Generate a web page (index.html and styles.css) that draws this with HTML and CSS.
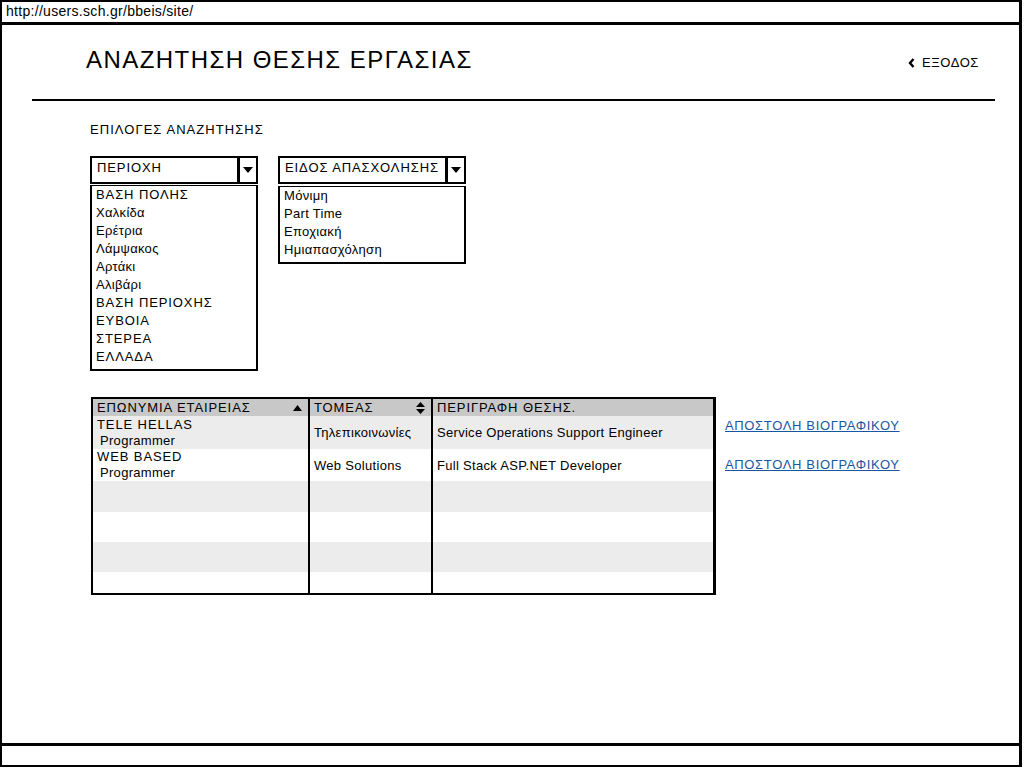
FILE: index.html
```html
<!DOCTYPE html>
<html lang="el">
<head>
<meta charset="utf-8">
<title>Αναζήτηση θέσης εργασίας</title>
<link rel="stylesheet" href="styles.css">
</head>
<body>
<div class="window">
  <div class="urlbar">http://users.sch.gr/bbeis/site/</div>
  <div class="content">
    <header class="top">
      <h1 class="title">ΑΝΑΖΗΤΗΣΗ ΘΕΣΗΣ ΕΡΓΑΣΙΑΣ</h1>
      <a class="exit caps" href="#"><svg width="7" height="10" viewBox="0 0 7 10"><path d="M5.5 1 L2 5 L5.5 9" fill="none" stroke="#000" stroke-width="2.4"/></svg>ΕΞΟΔΟΣ</a>
    </header>
    <div class="rule"></div>
    <section class="filters">
      <div class="filters-label caps">ΕΠΙΛΟΓΕΣ ΑΝΑΖΗΤΗΣΗΣ</div>
      <div class="combos">
        <div class="combo combo-area">
          <div class="select">
            <div class="select-text caps">ΠΕΡΙΟΧΗ</div>
            <div class="select-btn"><svg width="10" height="6" viewBox="0 0 10 6"><path d="M0 0 H10 L5 6 Z" fill="#000"/></svg></div>
          </div>
          <ul class="list">
            <li class="caps">ΒΑΣΗ ΠΟΛΗΣ</li>
            <li>Χαλκίδα</li>
            <li>Ερέτρια</li>
            <li>Λάμψακος</li>
            <li>Αρτάκι</li>
            <li>Αλιβάρι</li>
            <li class="caps">ΒΑΣΗ ΠΕΡΙΟΧΗΣ</li>
            <li class="caps">ΕΥΒΟΙΑ</li>
            <li class="caps">ΣΤΕΡΕΑ</li>
            <li class="caps">ΕΛΛΑΔΑ</li>
          </ul>
        </div>
        <div class="combo combo-type">
          <div class="select">
            <div class="select-text caps">ΕΙΔΟΣ ΑΠΑΣΧΟΛΗΣΗΣ</div>
            <div class="select-btn"><svg width="10" height="6" viewBox="0 0 10 6"><path d="M0 0 H10 L5 6 Z" fill="#000"/></svg></div>
          </div>
          <ul class="list">
            <li>Μόνιμη</li>
            <li>Part Time</li>
            <li>Εποχιακή</li>
            <li>Ημιαπασχόληση</li>
          </ul>
        </div>
      </div>
    </section>
    <section class="results">
      <div class="grid">
        <div class="col col1">
          <div class="th caps">ΕΠΩΝΥΜΙΑ ΕΤΑΙΡΕΙΑΣ<svg class="sort" width="9" height="6" viewBox="0 0 9 6"><path d="M0 6 L4.5 0 L9 6 Z" fill="#000"/></svg></div>
          <div class="td r1 alt two"><span class="caps">TELE HELLAS</span><span class="sub">Programmer</span></div>
          <div class="td r2 two"><span class="caps">WEB BASED</span><span class="sub">Programmer</span></div>
          <div class="td r3 alt"></div>
          <div class="td r4"></div>
          <div class="td r5 alt"></div>
          <div class="td r6"></div>
        </div>
        <div class="col col2">
          <div class="th caps">ΤΟΜΕΑΣ<svg class="sort" width="9" height="12" viewBox="0 0 9 12"><path d="M0 5 L4.5 0 L9 5 Z M0 7 L4.5 12 L9 7 Z" fill="#000"/></svg></div>
          <div class="td r1 alt">Τηλεπικοινωνίες</div>
          <div class="td r2">Web Solutions</div>
          <div class="td r3 alt"></div>
          <div class="td r4"></div>
          <div class="td r5 alt"></div>
          <div class="td r6"></div>
        </div>
        <div class="col col3">
          <div class="th caps">ΠΕΡΙΓΡΑΦΗ ΘΕΣΗΣ.</div>
          <div class="td r1 alt">Service Operations Support Engineer</div>
          <div class="td r2">Full Stack ASP.NET Developer</div>
          <div class="td r3 alt"></div>
          <div class="td r4"></div>
          <div class="td r5 alt"></div>
          <div class="td r6"></div>
        </div>
      </div>
      <div class="links">
        <a href="#" class="link caps">ΑΠΟΣΤΟΛΗ ΒΙΟΓΡΑΦΙΚΟΥ</a>
        <a href="#" class="link caps">ΑΠΟΣΤΟΛΗ ΒΙΟΓΡΑΦΙΚΟΥ</a>
      </div>
    </section>
  </div>
  <div class="statusbar"></div>
</div>
</body>
</html>
```

FILE: styles.css
```css
* { box-sizing: border-box; }
html, body { margin: 0; padding: 0; background: #fff; }
body {
  font-family: "Liberation Sans", Arial, sans-serif;
  color: #000;
  width: 1024px;
  height: 768px;
  overflow: hidden;
  letter-spacing: 0.3px;
}
.caps { letter-spacing: 0.9px; }
.window {
  width: 1022px;
  height: 767px;
  border: 2px solid #000;
  border-right-width: 3px;
  display: flex;
  flex-direction: column;
}
.urlbar {
  height: 23px;
  border-bottom: 3px solid #000;
  font-size: 14px;
  line-height: 19px;
  padding-left: 4px;
  letter-spacing: 0.3px;
}
.content {
  flex: 1;
  padding: 0 0 0 30px;
}
.statusbar {
  height: 22px;
  border-top: 3px solid #000;
}
.top {
  display: flex;
  justify-content: space-between;
  align-items: flex-start;
  padding: 20px 40px 0 54px;
  height: 74px;
}
.title {
  margin: 0;
  font-weight: normal;
  font-size: 24px;
  line-height: 30px;
  letter-spacing: 1.45px;
}
.exit {
  margin-top: 10px;
  color: #000;
  text-decoration: none;
  font-size: 13px;
  display: flex;
  align-items: center;
  gap: 7px;
}
.exit.caps { letter-spacing: 0.6px; }
.rule {
  width: 963px;
  height: 2px;
  background: #000;
}
.filters { padding: 21px 0 0 58px; }
.filters-label { font-size: 13px; line-height: 16px; }
.filters-label.caps { letter-spacing: 1.05px; }
.combos {
  display: flex;
  gap: 20px;
  margin-top: 18px;
  align-items: flex-start;
}
.combo-area { width: 168px; }
.combo-type { width: 188px; }
.select {
  display: flex;
  height: 28px;
}
.select-text {
  flex: 1;
  border: 2px solid #000;
  font-size: 13px;
  line-height: 20px;
  padding-left: 5px;
  white-space: nowrap;
  overflow: hidden;
}
.select-btn {
  width: 19px;
  border: 2px solid #000;
  border-left: 1px solid #000;
  display: flex;
  align-items: center;
  justify-content: center;
}
.list {
  list-style: none;
  margin: 0;
  padding: 0 0 3px 4px;
  border: 2px solid #000;
  border-top-width: 1px;
  font-size: 13px;
  line-height: 18px;
}
.combo-area .list { margin-top: 1px; }
.combo-type .list { margin-top: 2px; padding-left: 4px; }
.results {
  display: flex;
  align-items: flex-start;
  gap: 9px;
  padding: 26px 0 0 59px;
}
.grid {
  width: 625px;
  display: flex;
  border: 2px solid #000;
  border-right-width: 3px;
}
.col { display: flex; flex-direction: column; }
.col1 { width: 217px; border-right: 2px solid #000; }
.col2 { width: 123px; border-right: 2px solid #000; }
.col3 { flex: 1; }
.th {
  background: #c8c8c8;
  height: 17px;
  font-size: 13px;
  line-height: 17px;
  padding-left: 4px;
  padding-right: 6px;
  display: flex;
  justify-content: space-between;
  align-items: center;
  white-space: nowrap;
}
.td {
  font-size: 13px;
  padding-left: 4px;
  display: flex;
  align-items: center;
  white-space: nowrap;
}
.td.two {
  flex-direction: column;
  align-items: flex-start;
  justify-content: center;
  line-height: 16px;
}
.td .sub { padding-left: 3px; }
.alt { background: #ececec; }
.r1 { height: 33px; }
.r2 { height: 32px; }
.r3 { height: 31px; }
.r4 { height: 30px; }
.r5 { height: 30px; }
.r6 { height: 21px; }
.links {
  display: flex;
  flex-direction: column;
  padding-top: 20px;
  gap: 22px;
}
.link {
  color: #1a56a0;
  font-size: 13px;
  line-height: 17px;
  text-decoration: underline;
}
.link.caps { letter-spacing: 0.65px; }
```
